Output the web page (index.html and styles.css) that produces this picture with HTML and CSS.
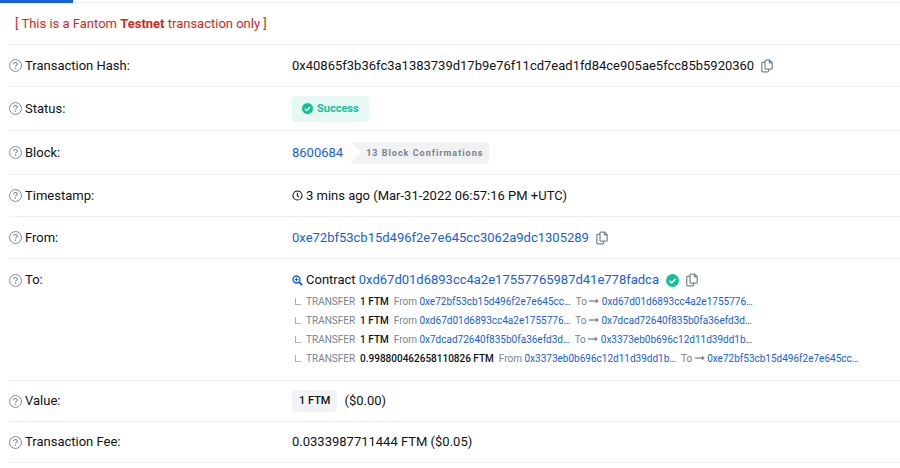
FILE: index.html
```html
<!DOCTYPE html>
<html lang="en">
<head>
    <meta charset="UTF-8">
    <meta name="viewport" content="width=device-width, initial-scale=1.0">
    <title>Transaction Details</title>
    <link rel="stylesheet" href="styles.css">
</head>
<body>
    <!-- icons -->
    <svg class="sprite" aria-hidden="true">
        <symbol id="i-help" viewBox="0 0 14 14">
            <circle cx="7" cy="7" r="6.4" fill="none" stroke="currentColor" stroke-width="1"/>
            <path d="M5 5.6C5 4.5 5.9 3.8 7 3.8s2 .7 2 1.7c0 1.3-2 1.3-2 2.6" fill="none" stroke="currentColor" stroke-width="1.1"/>
            <circle cx="7" cy="9.9" r="0.8" fill="currentColor"/>
        </symbol>
        <symbol id="i-copy" viewBox="0 0 12 14">
            <path d="M4.8 1.2h3.9l2.5 2.4v5.7a.8.8 0 0 1-.8.8H4.8a.8.8 0 0 1-.8-.8V2a.8.8 0 0 1 .8-.8zM8.4 1.4v2.5h2.6M3.8 3.4H1.6a.8.8 0 0 0-.8.8v7.8a.8.8 0 0 0 .8.8h5.2a.8.8 0 0 0 .8-.8v-1.7" fill="none" stroke="currentColor" stroke-width="1.2" stroke-linejoin="round"/>
        </symbol>
        <symbol id="i-check" viewBox="0 0 12 12">
            <circle cx="6" cy="6" r="6" fill="currentColor"/>
            <path d="M3.2 6.2l2 2 3.6-3.8" fill="none" stroke="#fff" stroke-width="1.5"/>
        </symbol>
        <symbol id="i-clock" viewBox="0 0 12 12">
            <circle cx="6" cy="6" r="5" fill="none" stroke="currentColor" stroke-width="1.1"/>
            <path d="M5.8 3v3.2l2 1.5" fill="none" stroke="currentColor" stroke-width="1.1"/>
        </symbol>
        <symbol id="i-zoom" viewBox="0 0 12 12">
            <circle cx="4.9" cy="4.9" r="3.8" fill="none" stroke="currentColor" stroke-width="1.5"/>
            <path d="M7.9 7.9l3.2 3.2" stroke="currentColor" stroke-width="2"/>
            <path d="M3 4.9h3.8M4.9 3v3.8" stroke="currentColor" stroke-width="1.1"/>
        </symbol>
        <symbol id="i-arrow" viewBox="0 0 10 8">
            <path d="M0 4h8" stroke="currentColor" stroke-width="1.3"/>
            <path d="M6.8 1.6L9.8 4 6.8 6.4z" fill="currentColor"/>
        </symbol>
    </svg>

    <div class="tab-line"><div class="tab-active"></div></div>

    <main class="details">
        <p class="notice">[ This is a Fantom <strong>Testnet</strong> transaction only ]</p>

        <div class="row">
            <div class="label"><svg class="icon-help"><use href="#i-help"/></svg>Transaction Hash:</div>
            <div class="value">
                <span>0x40865f3b36fc3a1383739d17b9e76f11cd7ead1fd84ce905ae5fcc85b5920360</span>
                <button class="copy-btn" aria-label="Copy hash"><svg><use href="#i-copy"/></svg></button>
            </div>
        </div>

        <div class="row row-tall">
            <div class="label"><svg class="icon-help"><use href="#i-help"/></svg>Status:</div>
            <div class="value">
                <span class="status"><svg class="icon-sm"><use href="#i-check"/></svg>Success</span>
            </div>
        </div>

        <div class="row row-tall">
            <div class="label"><svg class="icon-help"><use href="#i-help"/></svg>Block:</div>
            <div class="value">
                <a href="#">8600684</a>
                <span class="confirmations">13 Block Confirmations</span>
            </div>
        </div>

        <div class="row">
            <div class="label"><svg class="icon-help"><use href="#i-help"/></svg>Timestamp:</div>
            <div class="value value-tight">
                <svg class="icon-sm"><use href="#i-clock"/></svg>
                <span>3 mins ago (Mar-31-2022 06:57:16 PM +UTC)</span>
            </div>
        </div>

        <div class="row">
            <div class="label"><svg class="icon-help"><use href="#i-help"/></svg>From:</div>
            <div class="value">
                <a href="#">0xe72bf53cb15d496f2e7e645cc3062a9dc1305289</a>
                <button class="copy-btn" aria-label="Copy sender"><svg><use href="#i-copy"/></svg></button>
            </div>
        </div>

        <div class="row row-to">
            <div class="label"><svg class="icon-help"><use href="#i-help"/></svg>To:</div>
            <div>
                <div class="value">
                    <span class="contract">
                        <svg class="icon-sm icon-zoom"><use href="#i-zoom"/></svg>
                        <span>Contract <a href="#">0xd67d01d6893cc4a2e17557765987d41e778fadca</a></span>
                    </span>
                    <svg class="icon-verified"><use href="#i-check"/></svg>
                    <button class="copy-btn" aria-label="Copy contract"><svg><use href="#i-copy"/></svg></button>
                </div>
                <ul class="transfers">
                    <li><i class="elbow"></i><span>TRANSFER</span><b>1 FTM</b><span>From <a href="#">0xe72bf53cb15d496f2e7e645cc…</a></span><span class="dest">To <svg><use href="#i-arrow"/></svg> <a href="#">0xd67d01d6893cc4a2e1755776…</a></span></li>
                    <li><i class="elbow"></i><span>TRANSFER</span><b>1 FTM</b><span>From <a href="#">0xd67d01d6893cc4a2e1755776…</a></span><span class="dest">To <svg><use href="#i-arrow"/></svg> <a href="#">0x7dcad72640f835b0fa36efd3d…</a></span></li>
                    <li><i class="elbow"></i><span>TRANSFER</span><b>1 FTM</b><span>From <a href="#">0x7dcad72640f835b0fa36efd3d…</a></span><span class="dest">To <svg><use href="#i-arrow"/></svg> <a href="#">0x3373eb0b696c12d11d39dd1b…</a></span></li>
                    <li><i class="elbow"></i><span>TRANSFER</span><b>0.998800462658110826 FTM</b><span>From <a href="#">0x3373eb0b696c12d11d39dd1b…</a></span><span class="dest">To <svg><use href="#i-arrow"/></svg> <a href="#">0xe72bf53cb15d496f2e7e645cc…</a></span></li>
                </ul>
            </div>
        </div>

        <div class="row row-short">
            <div class="label"><svg class="icon-help"><use href="#i-help"/></svg>Value:</div>
            <div class="value">
                <span class="amount">1 FTM</span>
                <span>($0.00)</span>
            </div>
        </div>

        <div class="row row-short">
            <div class="label"><svg class="icon-help"><use href="#i-help"/></svg>Transaction Fee:</div>
            <div class="value">0.0333987711444 FTM ($0.05)</div>
        </div>
    </main>
</body>
</html>
```

FILE: styles.css
```css
:root {
    --link: #1560dd;
    --text: #111214;
    --muted: #77838f;
    --line: #eceef1;
    --green: #14bf98;
}

* { box-sizing: border-box; }

body {
    margin: 0;
    font-family: Roboto, "Liberation Sans", sans-serif;
    font-size: 13px;
    line-height: 18px;
    color: var(--text);
    background: #fff;
}

a {
    color: var(--link);
    text-decoration: none;
}

svg { flex-shrink: 0; }

.sprite {
    position: absolute;
    width: 0;
    height: 0;
}

.tab-line {
    height: 3px;
    border-bottom: 1px solid var(--line);
}

.tab-active {
    width: 73px;
    height: 3px;
    background: var(--link);
}

.details { padding-left: 9px; }

.notice {
    margin: 0;
    padding: 12px 6px 11px;
    color: #cb2b23;
    border-bottom: 1px solid var(--line);
}

.row {
    display: grid;
    grid-template-columns: 283px 1fr;
    align-items: center;
    min-height: 42px;
    border-bottom: 1px solid var(--line);
}

.row-tall { min-height: 44px; }
.row-short { min-height: 41px; }

.row-to {
    align-items: start;
    padding: 12px 0;
}

.label,
.value {
    display: flex;
    align-items: center;
}

.label { gap: 3px; }
.value { gap: 7px; }
.value-tight { gap: 3px; }

.icon-help {
    width: 13px;
    height: 13px;
    color: var(--muted);
}

.icon-sm {
    width: 11px;
    height: 11px;
}

.icon-zoom { color: var(--link); }

.icon-verified {
    width: 13px;
    height: 13px;
    color: var(--green);
}

.copy-btn {
    display: flex;
    padding: 0;
    border: none;
    background: none;
    color: var(--muted);
    cursor: pointer;
}

.copy-btn svg {
    width: 12px;
    height: 14px;
}

.status {
    display: flex;
    align-items: center;
    gap: 4px;
    padding: 4px 10px;
    border-radius: 4px;
    font-size: 11px;
    font-weight: 700;
    color: var(--green);
    background: #e5f8f4;
}

.confirmations {
    padding: 2px 6px 2px 16px;
    border-radius: 0 3px 3px 0;
    font-size: 9px;
    font-weight: 700;
    letter-spacing: 1px;
    color: var(--muted);
    background: #f0f2f4;
    clip-path: polygon(0 0, 100% 0, 100% 100%, 0 100%, 11px 50%);
}

.contract {
    display: flex;
    align-items: center;
    gap: 3px;
}

.transfers {
    margin: 3px 0 0;
    padding: 0 0 0 3px;
    list-style: none;
    font-size: 10px;
    line-height: 19px;
    color: var(--muted);
}

.transfers li {
    display: flex;
    align-items: center;
    gap: 5px;
}

.transfers b {
    font-weight: 500;
    color: var(--text);
}

.elbow {
    width: 6px;
    height: 7px;
    border-left: 1px solid #a9b1b9;
    border-bottom: 1px solid #a9b1b9;
}

.dest svg {
    width: 10px;
    height: 8px;
}

.amount {
    padding: 2px 7px;
    border-radius: 4px;
    font-size: 11px;
    font-weight: 500;
    background: #f1f3f5;
}
```
